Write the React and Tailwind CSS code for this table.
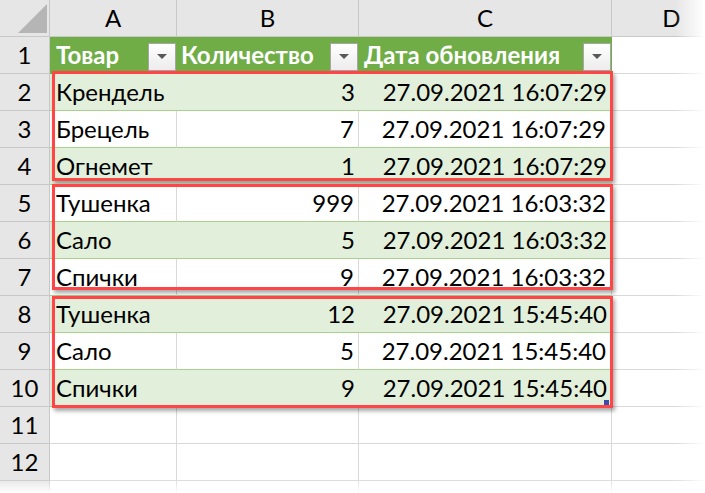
import React from "react";

const rows = [
  ["Крендель", "3", "27.09.2021 16:07:29"],
  ["Брецель", "7", "27.09.2021 16:07:29"],
  ["Огнемет", "1", "27.09.2021 16:07:29"],
  ["Тушенка", "999", "27.09.2021 16:03:32"],
  ["Сало", "5", "27.09.2021 16:03:32"],
  ["Спички", "9", "27.09.2021 16:03:32"],
  ["Тушенка", "12", "27.09.2021 15:45:40"],
  ["Сало", "5", "27.09.2021 15:45:40"],
  ["Спички", "9", "27.09.2021 15:45:40"],
];

function FilterBtn() {
  return (
    <div className="absolute right-[1px] top-[6px] w-[28px] h-[28px] border border-[#a6a6a6] bg-gradient-to-b from-white to-[#ececec] flex items-center justify-center">
      <svg width="10" height="6" viewBox="0 0 10 6">
        <path d="M0 0 L10 0 L5 5 Z" fill="#595959" />
      </svg>
    </div>
  );
}

function RowHead({ n }) {
  return (
    <div className="h-[37px] bg-[#e6e6e6] border-r border-b border-[#c8c8c8] flex items-center justify-center text-black">
      {n}
    </div>
  );
}

export default function App() {
  return (
    <div className="relative w-[705px] h-[493px] overflow-hidden bg-white text-[24px] leading-none text-black font-['Lato','Liberation_Sans',sans-serif]">
      <div className="grid grid-cols-[50px_127px_182px_253px_120px]">
        {/* column headers */}
        <div className="relative h-[37px] bg-[#e6e6e6] border-r border-b border-[#c8c8c8]">
          <svg className="absolute left-[18px] top-[4px]" width="29" height="29" viewBox="0 0 29 29">
            <path d="M29 0 L29 29 L0 29 Z" fill="#b5b5b5" />
          </svg>
        </div>
        {["A", "B", "C", "D"].map((c) => (
          <div key={c} className="h-[37px] bg-[#e6e6e6] border-r border-b border-[#c8c8c8] flex items-center justify-center">
            {c}
          </div>
        ))}

        {/* row 1: table header */}
        <RowHead n={1} />
        <div className="relative h-[37px] bg-[#70ad47] border-b border-[#70ad47] flex items-center pl-[6px] font-bold text-white">
          Товар
          <FilterBtn />
        </div>
        <div className="relative h-[37px] bg-[#70ad47] border-b border-[#70ad47] flex items-center pl-[4px] font-bold text-white">
          Количество
          <FilterBtn />
        </div>
        <div className="relative h-[37px] bg-[#70ad47] border-b border-[#70ad47] flex items-center pl-[5px] font-bold text-white">
          Дата обновления
          <FilterBtn />
        </div>
        <div className="h-[37px] border-r border-b border-[#d9d9d9]" />

        {/* data rows */}
        {rows.map((r, i) => {
          const band = i % 2 === 0;
          const cell = band
            ? "h-[37px] bg-[#e2efda] border-b border-[#a9d08e] flex items-center"
            : "h-[37px] bg-white border-r border-b border-r-[#d9d9d9] border-b-[#a9d08e] flex items-center";
          return (
            <React.Fragment key={i}>
              <RowHead n={i + 2} />
              <div className={cell + " pl-[6px]"}>{r[0]}</div>
              <div className={cell + " justify-end pr-[4px]"}>{r[1]}</div>
              <div className={cell + " justify-end pr-[5px]"}>{r[2]}</div>
              <div className="h-[37px] border-r border-b border-[#d9d9d9]" />
            </React.Fragment>
          );
        })}

        {/* empty rows */}
        {[11, 12, null].map((n, k) => (
          <React.Fragment key={k}>
            <RowHead n={n} />
            <div className="h-[37px] border-r border-b border-[#d9d9d9]" />
            <div className="h-[37px] border-r border-b border-[#d9d9d9]" />
            <div className="h-[37px] border-r border-b border-[#d9d9d9]" />
            <div className="h-[37px] border-r border-b border-[#d9d9d9]" />
          </React.Fragment>
        ))}
      </div>

      {/* resize handle */}
      <div className="absolute left-[604px] top-[400px] w-[5px] h-[5px] bg-[#3b4ba8]" />

      {/* red group frames */}
      <div className="absolute left-[52px] top-[71px] w-[561px] h-[110px] border-[3px] border-[#ff4545] shadow-[2px_3px_4px_rgba(0,0,0,0.35)]" />
      <div className="absolute left-[52px] top-[184px] w-[561px] h-[106px] border-[3px] border-[#ff4545] shadow-[2px_3px_4px_rgba(0,0,0,0.35)]" />
      <div className="absolute left-[52px] top-[296px] w-[561px] h-[112px] border-[3px] border-[#ff4545] shadow-[2px_3px_4px_rgba(0,0,0,0.35)]" />

      {/* soft edges */}
      <div className="absolute right-0 top-0 w-[30px] h-full bg-gradient-to-r from-transparent to-white" />
      <div className="absolute left-0 bottom-0 w-full h-[14px] bg-gradient-to-b from-transparent to-white" />
    </div>
  );
}
